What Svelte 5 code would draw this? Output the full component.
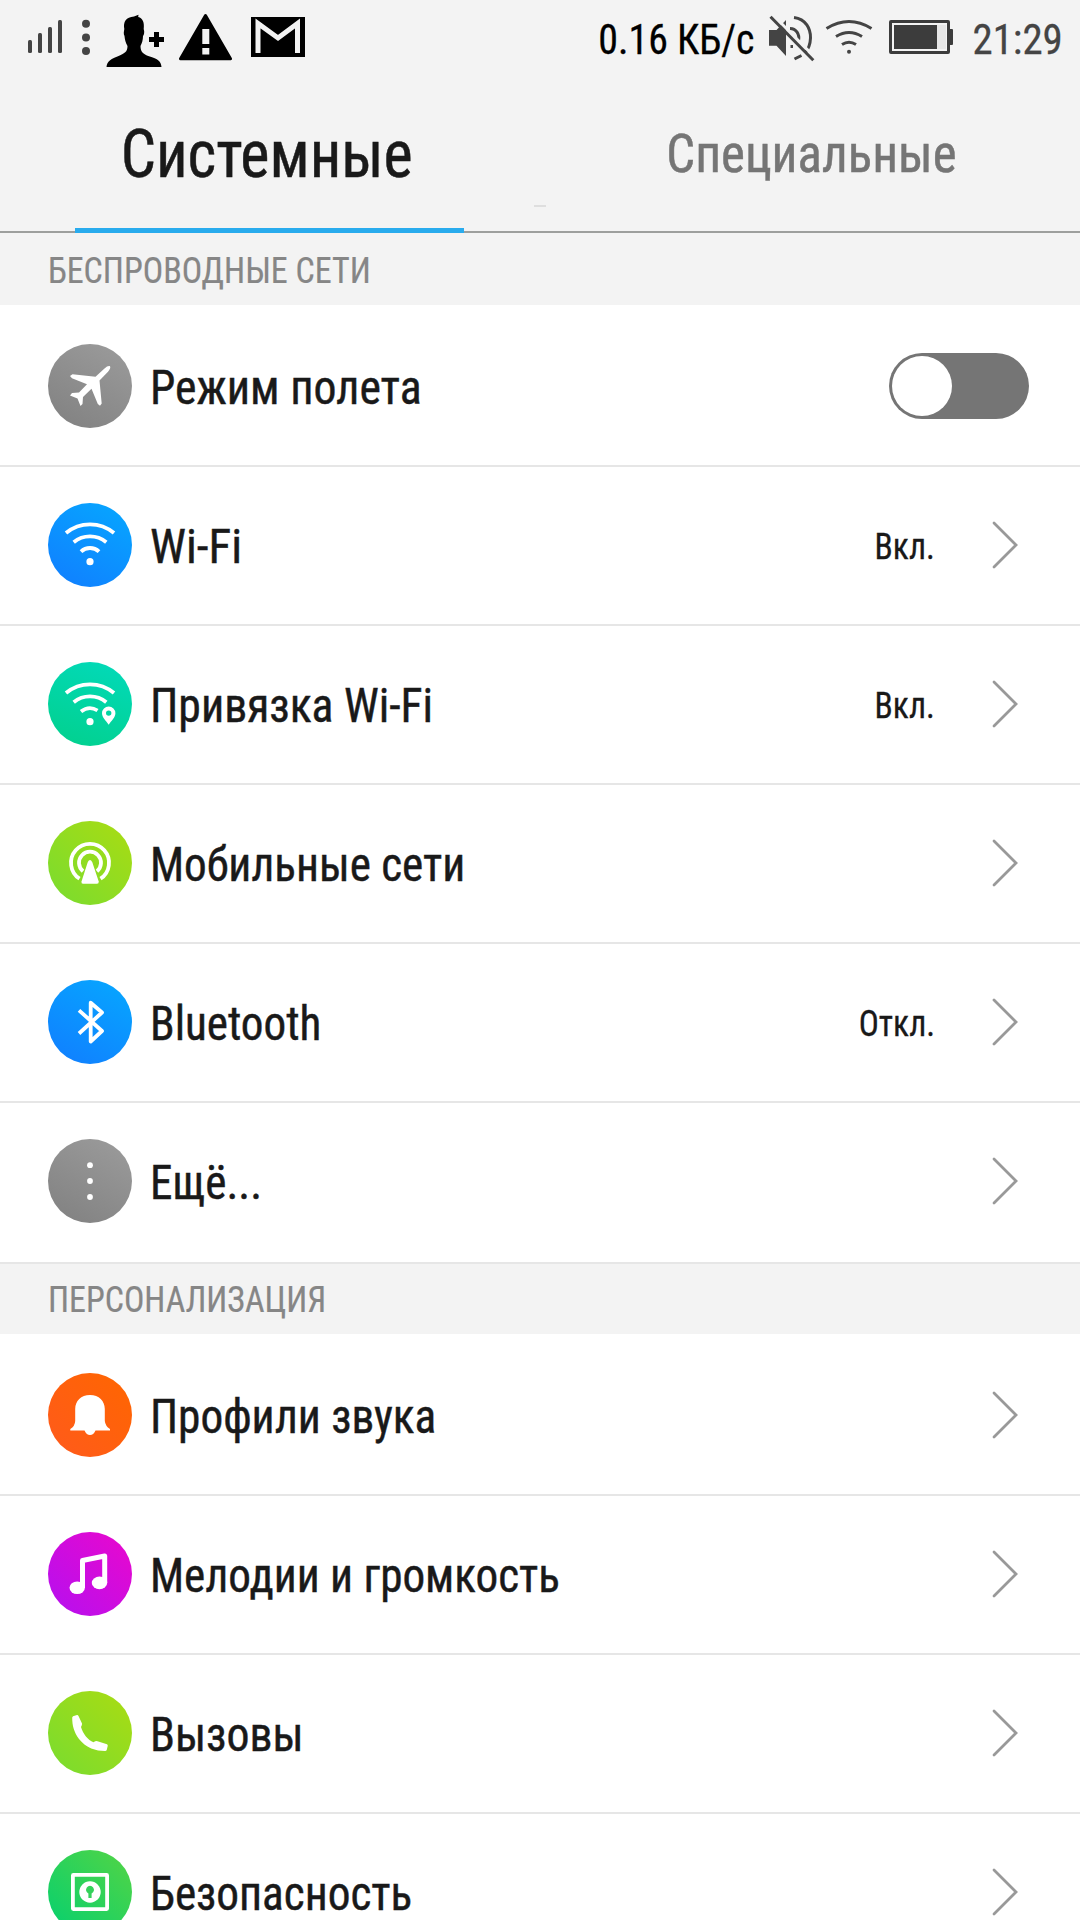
<script lang="ts">
	// squeeze narrows the glyphs of the text horizontally
	type Row = { icon: string; label: string; squeeze: number; value?: string; toggle?: boolean };

	let activeTab = $state('system');
	let airplane = $state(false);

	const tabs = [
		{ id: 'system', label: 'Системные' },
		{ id: 'special', label: 'Специальные' }
	];

	const sections: { title: string; squeeze: number; rows: Row[] }[] = [
		{
			title: 'БЕСПРОВОДНЫЕ СЕТИ',
			squeeze: 0.944,
			rows: [
				{ icon: 'airplane', label: 'Режим полета', squeeze: 0.953, toggle: true },
				{ icon: 'wifi', label: 'Wi-Fi', squeeze: 0.983, value: 'Вкл.' },
				{ icon: 'tether', label: 'Привязка Wi-Fi', squeeze: 0.952, value: 'Вкл.' },
				{ icon: 'mobile', label: 'Мобильные сети', squeeze: 0.941 },
				{ icon: 'bluetooth', label: 'Bluetooth', squeeze: 0.94, value: 'Откл.' },
				{ icon: 'more', label: 'Ещё...', squeeze: 0.94 }
			]
		},
		{
			title: 'ПЕРСОНАЛИЗАЦИЯ',
			squeeze: 0.942,
			rows: [
				{ icon: 'bell', label: 'Профили звука', squeeze: 0.943 },
				{ icon: 'music', label: 'Мелодии и громкость', squeeze: 0.941 },
				{ icon: 'phone', label: 'Вызовы', squeeze: 0.953 },
				{ icon: 'security', label: 'Безопасность', squeeze: 0.943 }
			]
		}
	];
</script>

<div class="screen">
	<!-- STATUS BAR -->
	<header class="status-bar">
		<div class="status-left">
			<svg width="34" height="76" viewBox="28 0 34 76" fill="#444">
				<rect x="28" y="40" width="4" height="13" rx="1.5" />
				<rect x="38" y="33" width="4" height="20" rx="1.5" />
				<rect x="48" y="27" width="4" height="26" rx="1.5" />
				<rect x="58" y="20" width="4" height="33" rx="1.5" />
			</svg>
			<svg class="dots" width="8" height="76" viewBox="82 0 8 76" fill="#444">
				<circle cx="86" cy="23.7" r="4" />
				<circle cx="86" cy="37.4" r="4" />
				<circle cx="86" cy="51" r="4" />
			</svg>
			<svg class="person" width="58" height="76" viewBox="106 0 58 76">
				<path d="M106.5 67C107 61 111 59 118 56.2C124.500 53.500 127.500 52 127.500 46C125.500 43 124.800 39 124.500 36C123.200 34 124 31 124.300 29C123 22 126 17 134 16.500L138.500 14.800L138.200 17C143 18 144.500 23 143.700 29C144.800 32 144 35 143 36C143 40 142 43 140.500 46C140.500 52 143 54 149 56.200C158 59 161 61 161.500 67Z" />
				<path d="M149 39.500H164M156.500 32V47" stroke="#000" stroke-width="5" />
			</svg>
			<svg class="warning" width="53" height="76" viewBox="179 0 53 76">
				<path d="M205.500 15.500L230.500 58.800H180.500Z" stroke="#000" stroke-width="3" stroke-linejoin="round" />
				<path d="M205.800 29V44M205.800 48V54.500" stroke="#f3f3f3" stroke-width="7" />
			</svg>
			<svg class="mail" width="54" height="76" viewBox="251 0 54 76">
				<rect x="251" y="17" width="54" height="40" />
				<path d="M258 53V23.500L278 38L297.500 23.500V53" fill="none" stroke="#f3f3f3" stroke-width="5" />
			</svg>
		</div>
		<div class="status-right">
			<span class="speed">0.16 КБ/с</span>
			<svg class="mute" width="46" height="76" viewBox="769 0 46 76" fill="none" stroke="#444" stroke-width="3">
				<path d="M769 30H776.500L786 20V56L776.500 45.700H769Z" fill="#444" stroke="none" />
				<path d="M794 17.500C806 19 810.700 29 810.500 38C810.300 44 808.500 49 805 53M790 28.500C796 28.500 800 34 798.500 41" />
				<path d="M794.500 59L801.500 55.500M790.500 46.500H793" />
				<path d="M772.500 14.500L815.500 58" stroke="#f3f3f3" />
				<path d="M770.500 16.700L813.300 60.300" />
			</svg>
			<svg class="net" width="48" height="76" viewBox="825 0 48 76" fill="none" stroke="#444" stroke-width="3">
				<path d="M826.500 28.500Q849 14.500 871.500 28.500M836 36.500Q849 28.500 862 36.500M842 44.500Q849 40 856 44.500" />
				<circle cx="849" cy="51.800" r="2" fill="#444" stroke="none" />
			</svg>
			<svg class="battery" width="64" height="76" viewBox="889 0 64 76" fill="#3c3c3c">
				<rect x="890.500" y="21.500" width="58" height="31" rx="0.500" fill="none" stroke="#3c3c3c" stroke-width="3" />
				<rect x="894" y="25" width="43" height="24" />
				<rect x="937" y="25" width="9" height="24" fill="#e6e6e6" />
				<rect x="948" y="29" width="5" height="16" rx="1" />
			</svg>
			<span class="clock">21:29</span>
		</div>
	</header>

	<!-- TABS -->
	<nav class="tabs">
		{#each tabs as tab}
			<button class="tab" class:active={activeTab === tab.id} onclick={() => (activeTab = tab.id)}>
				<span class="tab-label">{tab.label}</span>
			</button>
		{/each}
		<span class="tab-mark"></span>
	</nav>

	{#each sections as section}
		<section>
			<h2 class="section-title">
				<span class="squeezed" style:--squeeze={section.squeeze}>{section.title}</span>
			</h2>
			<div class="rows">
				{#each section.rows as row}
					<div class="row">
						<div class="icon {row.icon}">
							<svg width="84" height="84" viewBox="0 0 84 84" fill="none" stroke="#fff" stroke-width="3.8">
								{#if row.icon === 'airplane'}
									<path fill="#fff" stroke="none" d="M56.500 24.500C59 22 61 21.500 62 22.200C62.800 23 62 25.500 60 27.800L51.500 36.500L53.700 59.500L52 61.800L49.800 60L43.500 44.800L35 53L34.500 60L32.500 62L29.500 54.500L22 51.500L24 49L31 48.500L39 40.300L24 34.300L22 32L24.500 30.200L47.500 32.800Z" />
								{:else if row.icon === 'wifi'}
									<path d="M18 30A37.500 37.500 0 0 1 66 30M25.700 39.200A25.700 25.700 0 0 1 58.300 39.200M33 48.600A13 13 0 0 1 51 48.600" />
									<circle cx="42" cy="58.700" r="3.600" fill="#fff" stroke="none" />
								{:else if row.icon === 'tether'}
									<path d="M18 31A37.500 37.500 0 0 1 66 31M25.700 40.200A25.700 25.700 0 0 1 58.300 40.200M33 49.600Q41 43.200 49.500 48.500" />
									<circle cx="42" cy="59.700" r="3.600" fill="#fff" stroke="none" />
									<path fill="#fff" fill-rule="evenodd" stroke="none" d="M60.700 62.700C58 58.800 54 55.500 54 51.300A6.700 6.700 0 0 1 67.400 51.300C67.400 55.500 63.400 58.800 60.700 62.700ZM60.700 48.400A2.700 2.700 0 1 0 60.700 53.800A2.700 2.700 0 1 0 60.700 48.400Z" />
								{:else if row.icon === 'mobile'}
									<path d="M31.500 57.700A19 19 0 1 1 52.500 57.700M35 50.200A11 11 0 1 1 49 50.200" />
									<path fill="#fff" stroke="none" d="M39.800 41Q42 37 44.200 41L50.700 60.500Q51 62.800 49 62.800H35Q33 62.800 33.500 60.500Z" />
								{:else if row.icon === 'bluetooth'}
									<path stroke-linejoin="round" d="M31 30.300L54 51L42.700 61.500V22.700L54 32.500L31 53.500" />
								{:else if row.icon === 'more'}
									<g fill="#fff" stroke="none">
										<circle cx="42" cy="26.200" r="2.900" />
										<circle cx="42" cy="42" r="2.900" />
										<circle cx="42" cy="58" r="2.900" />
									</g>
								{:else if row.icon === 'bell'}
									<path fill="#fff" stroke="none" d="M42 22C51 22 56.800 28 56.800 36V48Q57.300 53 62 56V57.500H47.500Q45.500 62 42 62Q38.500 62 36.500 57.500H22.300V56Q27 53 27.200 48V36C27.200 28 33 22 42 22Z" />
								{:else if row.icon === 'music'}
									<path stroke-width="5" stroke-linejoin="round" d="M34.500 56V28.500L56.700 24V51" />
									<g fill="#fff" stroke="none">
										<ellipse cx="29.200" cy="55.800" rx="7.700" ry="6.300" />
										<ellipse cx="51.500" cy="50.900" rx="7.700" ry="6.300" />
									</g>
								{:else if row.icon === 'phone'}
									<path fill="#fff" stroke="none" d="M25 25.200L29 23.900Q30 23.800 30.500 25L34 32.500Q34.300 33.500 33 36C35 43 40 49 45.500 51.200Q48 49.500 49.500 50.200L59 53.300Q60 54 59.700 55L58.800 58.800Q58.500 60 57 60C48 60 38 57 31 48C26 41 24.200 35 24.200 26.500Z" />
								{:else if row.icon === 'security'}
									<rect x="24.900" y="24.900" width="34.200" height="34.200" rx="0.500" />
									<circle cx="42" cy="42" r="10.700" fill="#fff" stroke="none" />
									<path fill="#34d15a" stroke="none" d="M40.400 43.500A4 4 0 1 1 43.600 43.500V48H40.400Z" />
								{/if}
							</svg>
						</div>
						<span class="label">
							<span class="squeezed" style:--squeeze={row.squeeze}>{row.label}</span>
						</span>
						{#if row.toggle}
							<button
								class="toggle"
								class:on={airplane}
								aria-label={row.label}
								onclick={() => (airplane = !airplane)}
							>
								<span class="knob"></span>
							</button>
						{:else}
							{#if row.value}
								<span class="value">{row.value}</span>
							{/if}
							<svg class="chevron" width="26" height="48" viewBox="0 0 26 48">
								<path d="M2 2L24 24L2 46" fill="none" stroke="#999" stroke-width="2.800" stroke-linecap="round" />
							</svg>
						{/if}
					</div>
				{/each}
			</div>
		</section>
	{/each}
</div>

<style>
	:global(body) {
		background: #fff;
		overflow: hidden;
	}
	.screen {
		width: 1080px;
		height: 1920px;
		overflow: hidden;
		background: #fff;
		color: #191919;
		font-family: 'Roboto Condensed', Roboto, sans-serif;
		font-stretch: 75%;
		white-space: nowrap;
	}
	svg { display: block; flex: none; }
	button {
		border: none;
		background: none;
		padding: 0;
		font: inherit;
		color: inherit;
	}
	.squeezed {
		display: inline-block;
		transform: scaleX(var(--squeeze));
		transform-origin: left;
	}

	/* STATUS BAR */
	.status-bar {
		display: flex;
		justify-content: space-between;
		height: 76px;
		padding: 0 17px 0 28px;
		background: #f3f3f3;
	}
	.status-left, .status-right { display: flex; }
	.dots { margin-left: 20px; }
	.person { margin-left: 16px; }
	.warning { margin-left: 15px; }
	.mail { margin-left: 19px; }
	.speed, .clock {
		font-size: 42px;
		line-height: 80px;
		transform-origin: right;
		-webkit-text-stroke: 0.3px;
	}
	.speed { color: #000; transform: scaleX(0.95); }
	.clock { color: #444; transform: scaleX(0.973); margin-left: 17px; }
	.mute { margin-left: 15px; }
	.net { margin-left: 10px; }
	.battery { margin-left: 16px; }

	/* TABS */
	.tabs {
		position: relative;
		display: flex;
		height: 155px;
		background: #f3f3f3;
		border-bottom: 2px solid #9d9f9d;
	}
	.tab {
		position: relative;
		flex: 1;
		font-size: 54px;
		line-height: 155px;
		color: #757575;
	}
	.tab-label {
		display: block;
		padding-left: 3px;
		transform: scaleX(0.942);
		-webkit-text-stroke: 0.5px;
	}
	.tab.active {
		font-size: 66px;
		line-height: 157px;
		color: #191919;
	}
	.tab.active .tab-label { padding: 0 7px 0 0; }
	.tab.active::after {
		content: '';
		position: absolute;
		left: 75px;
		right: 76px;
		bottom: -2px;
		height: 5px;
		background: #29abed;
	}
	.tab-mark {
		position: absolute;
		left: 534px;
		top: 129px;
		width: 12px;
		height: 2px;
		background: #dedede;
	}

	/* SECTIONS */
	.section-title {
		height: 70px;
		margin: 0;
		padding: 0 48px;
		background: #f3f3f3;
		font-size: 36px;
		font-weight: 400;
		line-height: 72px;
		color: #868686;
		-webkit-text-stroke: 0.2px;
	}
	section:first-of-type .section-title {
		height: 72px;
		line-height: 76px;
	}

	/* ROWS */
	.row {
		display: flex;
		align-items: center;
		height: 155px;
		padding: 0 62px 2px 48px;
		border-bottom: 2px solid #e6e6e6;
	}
	.row:first-child { padding-top: 3px; }
	.row:last-child { padding-bottom: 4px; }
	.icon {
		width: 84px;
		height: 84px;
		border-radius: 50%;
	}
	.airplane, .more { background: linear-gradient(30deg, #808080, #9c9c9c); }
	.wifi, .bluetooth { background: linear-gradient(30deg, #117dff, #06a8ff); }
	.tether { background: linear-gradient(20deg, #02d08c, #02dabb); }
	.mobile, .phone { background: linear-gradient(45deg, #78dc30, #aadc12); }
	.bell { background: linear-gradient(45deg, #ff5a1c, #ff6600); }
	.music { background: linear-gradient(45deg, #b410f0, #ea08cc); }
	.security { background: linear-gradient(45deg, #04d070, #54d444); }
	.label {
		flex: 1;
		margin-left: 18px;
		padding-top: 5px;
		font-size: 48px;
		line-height: 56px;
		-webkit-text-stroke: 0.45px;
	}
	.value {
		margin-right: 57px;
		padding-top: 5px;
		font-size: 36px;
		transform: scaleX(0.93);
		transform-origin: right;
		-webkit-text-stroke: 0.3px;
	}
	.toggle {
		width: 140px;
		height: 66px;
		margin-right: -11px;
		padding: 3px;
		border-radius: 33px;
		background: #757575;
	}
	.toggle.on {
		background: #29abed;
		padding-left: 77px;
	}
	.knob {
		display: block;
		width: 60px;
		height: 60px;
		border-radius: 50%;
		background: #fff;
	}
</style>
